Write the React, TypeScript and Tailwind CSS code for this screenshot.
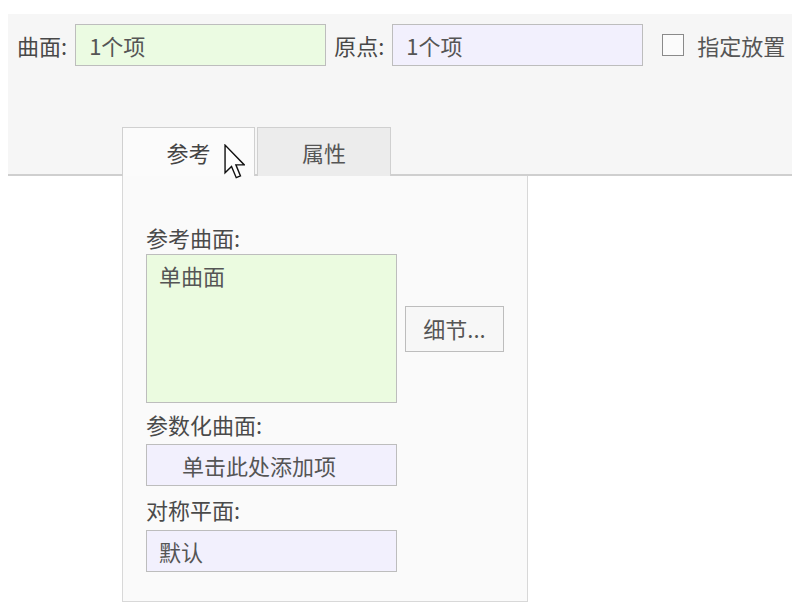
import React from "react";

const font = { fontFamily: '"Noto Sans CJK SC", "Noto Sans", sans-serif' };

function Field({ label, value, tone }: { label: string; value: string; tone: "green" | "purple" }) {
  return (
    <div className="flex items-center gap-[8px]">
      <span className="text-[22px] leading-[28px] text-[#484848]">{label}</span>
      <div
        className={`w-[251px] h-[42px] border-[1.5px] border-[#bdbdbd] pl-[13px] flex items-center text-[22px] text-[#555] ${
          tone === "green" ? "bg-[#ebfbe2]" : "bg-[#f2f0fd]"
        }`}
      >
        {value}
      </div>
    </div>
  );
}

export default function App() {
  return (
    <div className="relative w-[792px] h-[614px] bg-white overflow-hidden" style={font}>
      {/* top band with fields and tabs */}
      <div className="ml-[8px] mt-[14px] h-[162px] bg-[#f6f6f6] border-b-[2px] border-[#cfcfcf] flex flex-col justify-between">
        <div className="flex items-center pl-[9px] pt-[10px]">
          <Field label="曲面:" value="1个项" tone="green" />
          <div className="ml-[8px]">
            <Field label="原点:" value="1个项" tone="purple" />
          </div>
          <div className="ml-[19px] w-[22px] h-[22px] border-[1.5px] border-[#8a8a8a] bg-[#fbfbfb]" />
          <span className="ml-[13px] text-[22px] leading-[28px] text-[#555] whitespace-nowrap">指定放置</span>
        </div>
        <div className="flex ml-[114px] gap-[2px] -mb-[2px]">
          <div className="w-[133px] h-[49px] bg-[#fbfbfb] border-[1.5px] border-b-0 border-[#d0d0d0] flex items-center justify-center text-[22px] text-[#444]">
            参考
          </div>
          <div className="w-[134px] h-[49px] bg-[#ececec] border-[1.5px] border-b-0 border-[#d0d0d0] flex items-center justify-center text-[22px] text-[#555]">
            属性
          </div>
        </div>
      </div>

      {/* reference panel */}
      <div className="ml-[122px] w-[406px] h-[426px] bg-[#fafafa] border-[1.5px] border-t-0 border-[#d8d8d8] pl-[23px] pt-[47px] flex flex-col">
        <div className="text-[22px] leading-[28px] text-[#4a4a4a]">参考曲面:</div>
        <div className="mt-[3px] flex items-center gap-[8px]">
          <div className="w-[251px] h-[149px] bg-[#ebfbe0] border-[1.5px] border-[#bdbdbd] pl-[12px] pt-[6px] text-[22px] leading-[28px] text-[#555]">
            单曲面
          </div>
          <div className="w-[99px] h-[46px] bg-[#f7f7f7] border-[1.5px] border-[#bdbdbd] flex items-center justify-center text-[22px] text-[#555]">
            细节...
          </div>
        </div>
        <div className="mt-[7px] text-[22px] leading-[28px] text-[#4a4a4a]">参数化曲面:</div>
        <div className="mt-[6px] w-[251px] h-[42px] bg-[#f2f0fd] border-[1.5px] border-[#bdbdbd] pl-[35px] flex items-center text-[22px] text-[#555]">
          单击此处添加项
        </div>
        <div className="mt-[9px] text-[22px] leading-[28px] text-[#4a4a4a]">对称平面:</div>
        <div className="mt-[7px] w-[251px] h-[42px] bg-[#f2f0fd] border-[1.5px] border-[#bdbdbd] pl-[12px] flex items-center text-[22px] text-[#555]">
          默认
        </div>
      </div>

      {/* mouse cursor */}
      <svg className="absolute left-[224px] top-[144px]" width="21" height="36" viewBox="0 0 12 20.5">
        <path
          d="M0.6 0.6 L0.6 16.4 L4.3 12.8 L7 19.2 L9.4 18.2 L6.8 11.9 L11.6 11.9 Z"
          fill="#fff"
          stroke="#111"
          strokeWidth="0.8"
          strokeLinejoin="miter"
        />
      </svg>
    </div>
  );
}
